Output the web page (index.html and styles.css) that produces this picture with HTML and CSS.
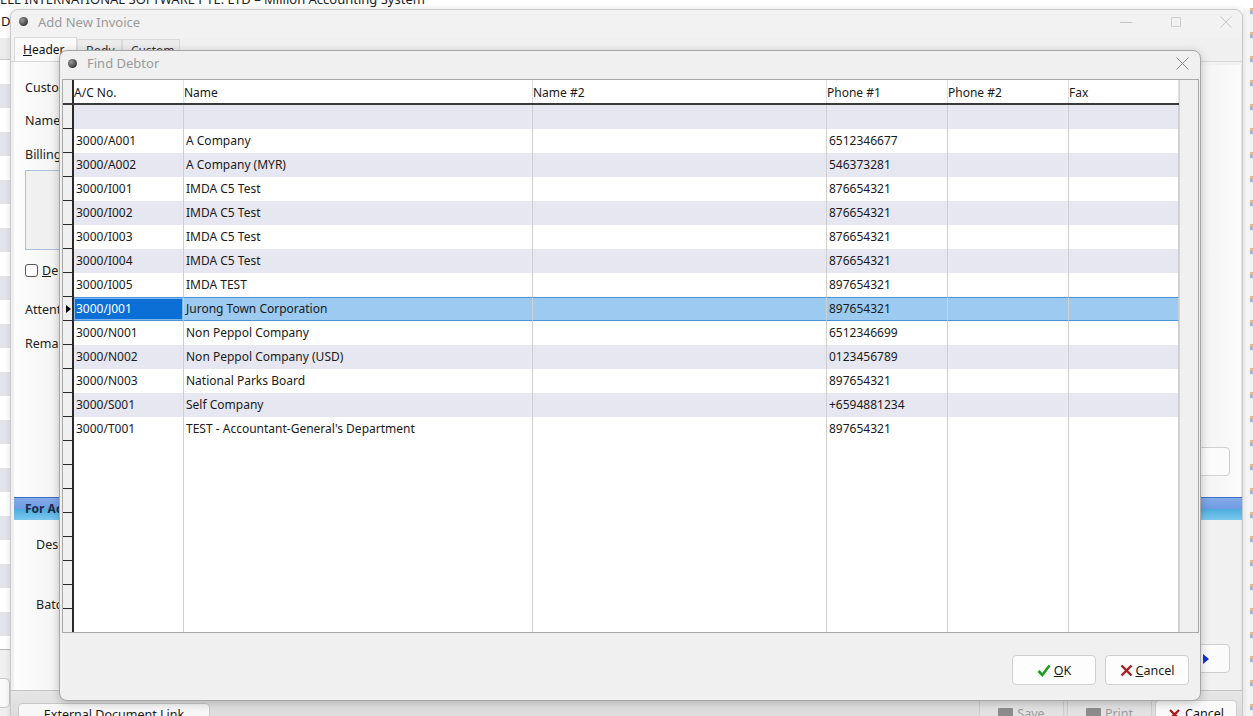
FILE: index.html
```html
<!DOCTYPE html>
<html lang="en">

<head>
  <meta charset="UTF-8" />
  <meta name="viewport" content="width=device-width, initial-scale=1.0" />
  <title>Find Debtor</title>
  <link rel="stylesheet" href="styles.css">
</head>

<body>
  <div class="desk">
    <!-- main application behind the windows -->
    <div class="app">
      <div class="app-title"><span>ELL INTERNATIONAL SOFTWARE PTE. LTD – Million Accounting System</span></div>
      <div class="app-body">
        <div class="app-left">
          <div class="app-menu">D</div>
          <div class="app-gap"></div>
          <div class="app-rows"></div>
          <div class="app-foot"><div class="app-box"></div></div>
        </div>
        <div class="app-mid"></div>
        <div class="app-right"></div>
      </div>
    </div>

    <!-- Add New Invoice window -->
    <div class="win invoice">
      <div class="win-title">
        <span class="orb"></span>
        <span class="win-caption">Add New Invoice</span>
        <div class="win-ctrls">
          <svg width="12" height="12" viewBox="0 0 12 12"><path d="M0 6.5h12" stroke="#c4c4c4" stroke-width="1" /></svg>
          <svg width="12" height="12" viewBox="0 0 12 12"><rect x="1.5" y="1.5" width="9" height="9" fill="none" stroke="#d0d0d0" stroke-width="1" /></svg>
          <svg width="12" height="12" viewBox="0 0 12 12"><path d="M0.5 0.5l11 11M11.5 0.5l-11 11" stroke="#c8c8c8" stroke-width="1" /></svg>
        </div>
      </div>
      <div class="tabs">
        <div class="tab active"><u>H</u>eader</div>
        <div class="tab">Body</div>
        <div class="tab">Custom</div>
      </div>
      <div class="inv-panel">
        <div class="inv-top">
          <div class="inv-form">
            <div class="lbl">Customer</div>
            <div class="lbl lbl-name">Name</div>
            <div class="lbl lbl-bill">Billing Address</div>
            <div class="addr-box"></div>
            <div class="chk-row"><span class="chk"></span><span><u>D</u>elivery Address</span></div>
            <div class="lbl lbl-attn">Attention</div>
            <div class="lbl lbl-rem">Remarks</div>
          </div>
          <div class="inv-side">
            <div class="side-btn"></div>
          </div>
        </div>
        <div class="sect-bar">For Accounting</div>
        <div class="inv-lower">
          <div class="inv-form2">
            <div class="lbl">Description</div>
            <div class="lbl lbl-batch">Batch</div>
          </div>
          <div class="inv-side side-low">
            <div class="side-btn"><span class="tri"></span></div>
          </div>
        </div>
      </div>
      <div class="inv-foot">
        <div class="foot-tab">External Document Link</div>
        <div class="foot-btns">
          <div class="fbtn"><span class="ficon"></span>Save</div>
          <div class="fbtn"><span class="ficon"></span>Print</div>
          <div class="fbtn fbtn-cancel">
            <svg width="13" height="13" viewBox="0 0 13 13"><path d="M2 2l9 9M11 2l-9 9" stroke="#b01c1c" stroke-width="2.4" /></svg>Cancel
          </div>
        </div>
      </div>
    </div>

    <!-- Find Debtor dialog -->
    <div class="dlg">
      <div class="dlg-title">
        <span class="orb"></span>
        <span class="dlg-caption">Find Debtor</span>
        <svg class="dlg-close" width="13" height="13" viewBox="0 0 13 13"><path d="M0.5 0.5l12 12M12.5 0.5l-12 12" stroke="#8a8a8a" stroke-width="1" /></svg>
      </div>

      <div class="grid-wrap">
        <div class="grid">
          <div class="row head">
            <div class="ind"></div>
            <div>A/C No.</div>
            <div>Name</div>
            <div>Name #2</div>
            <div>Phone #1</div>
            <div>Phone #2</div>
            <div>Fax</div>
          </div>
          <div class="row alt"><div class="ind"></div><div></div><div></div><div></div><div></div><div></div><div></div></div>
          <div class="row"><div class="ind"></div><div>3000/A001</div><div>A Company</div><div></div><div>6512346677</div><div></div><div></div></div>
          <div class="row alt"><div class="ind"></div><div>3000/A002</div><div>A Company (MYR)</div><div></div><div>546373281</div><div></div><div></div></div>
          <div class="row"><div class="ind"></div><div>3000/I001</div><div>IMDA C5 Test</div><div></div><div>876654321</div><div></div><div></div></div>
          <div class="row alt"><div class="ind"></div><div>3000/I002</div><div>IMDA C5 Test</div><div></div><div>876654321</div><div></div><div></div></div>
          <div class="row"><div class="ind"></div><div>3000/I003</div><div>IMDA C5 Test</div><div></div><div>876654321</div><div></div><div></div></div>
          <div class="row alt"><div class="ind"></div><div>3000/I004</div><div>IMDA C5 Test</div><div></div><div>876654321</div><div></div><div></div></div>
          <div class="row"><div class="ind"></div><div>3000/I005</div><div>IMDA TEST</div><div></div><div>897654321</div><div></div><div></div></div>
          <div class="row selected"><div class="ind"><span class="mark"></span></div><div class="cur">3000/J001</div><div>Jurong Town Corporation</div><div></div><div>897654321</div><div></div><div></div></div>
          <div class="row"><div class="ind"></div><div>3000/N001</div><div>Non Peppol Company</div><div></div><div>6512346699</div><div></div><div></div></div>
          <div class="row alt"><div class="ind"></div><div>3000/N002</div><div>Non Peppol Company (USD)</div><div></div><div>0123456789</div><div></div><div></div></div>
          <div class="row"><div class="ind"></div><div>3000/N003</div><div>National Parks Board</div><div></div><div>897654321</div><div></div><div></div></div>
          <div class="row alt"><div class="ind"></div><div>3000/S001</div><div>Self Company</div><div></div><div>+6594881234</div><div></div><div></div></div>
          <div class="row"><div class="ind"></div><div>3000/T001</div><div>TEST - Accountant-General's Department</div><div></div><div>897654321</div><div></div><div></div></div>
          <div class="row"><div class="ind"></div><div></div><div></div><div></div><div></div><div></div><div></div></div>
          <div class="row"><div class="ind"></div><div></div><div></div><div></div><div></div><div></div><div></div></div>
          <div class="row"><div class="ind"></div><div></div><div></div><div></div><div></div><div></div><div></div></div>
          <div class="row"><div class="ind"></div><div></div><div></div><div></div><div></div><div></div><div></div></div>
          <div class="row"><div class="ind"></div><div></div><div></div><div></div><div></div><div></div><div></div></div>
          <div class="row"><div class="ind"></div><div></div><div></div><div></div><div></div><div></div><div></div></div>
          <div class="row"><div class="ind"></div><div></div><div></div><div></div><div></div><div></div><div></div></div>
          <div class="row"><div class="ind"></div><div></div><div></div><div></div><div></div><div></div><div></div></div>
        </div>
        <div class="grid-side"></div>
      </div>

      <div class="dlg-foot">
        <button class="btn">
          <svg width="14" height="13" viewBox="0 0 14 13"><path d="M1.5 7l3.8 4L12.5 1.5" fill="none" stroke="#1f9a22" stroke-width="2.6" /></svg>
          <span><u>O</u>K</span>
        </button>
        <button class="btn">
          <svg width="13" height="13" viewBox="0 0 13 13"><path d="M1.5 1.5l10 10M11.5 1.5l-10 10" stroke="#a81c1c" stroke-width="2.4" /></svg>
          <span><u>C</u>ancel</span>
        </button>
      </div>
    </div>
  </div>
</body>

</html>
```

FILE: styles.css
```css
* {
  box-sizing: border-box;
}

body {
  margin: 0;
  font-family: "Noto Sans", "Open Sans", sans-serif;
  font-size: 12px;
  color: #1a1a1a;
  background: #fff;
}

.desk {
  position: relative;
  width: 1253px;
  height: 716px;
  overflow: hidden;
}

/* ---------- main app behind ---------- */
.app {
  height: 100%;
  display: flex;
  flex-direction: column;
}

.app-title {
  height: 8px;
  flex-shrink: 0;
  overflow: hidden;
  font-size: 13px;
  line-height: 13px;
  color: #222;
}

.app-title span {
  display: block;
  margin-top: -7px;
  white-space: nowrap;
}

.app-body {
  flex: 1;
  display: flex;
}

.app-left {
  width: 10px;
  display: flex;
  flex-direction: column;
  background: #fff;
}

.app-menu {
  height: 30px;
  font-size: 13px;
  line-height: 26px;
  padding-left: 1px;
  overflow: hidden;
}

.app-gap {
  height: 22px;
  background: #ececec;
  border-bottom: 1px solid #c8c8c8;
}

.app-rows {
  flex: 1;
  background: repeating-linear-gradient(to bottom, #fff 0 24px, #e4e4ee 24px 48px);
  border-bottom: 1px solid #b8b8b8;
}

.app-foot {
  height: 66px;
  background: #f0f0f0;
  padding-top: 28px;
}

.app-box {
  height: 30px;
  border: 1px solid #c8c8c8;
  border-left: none;
  border-radius: 0 5px 5px 0;
  background: #fafafa;
}

.app-mid {
  flex: 1;
}

.app-right {
  width: 10px;
  background:
    linear-gradient(to right, #f6f6f6 0 7px, transparent 7px),
    repeating-linear-gradient(to bottom, #e7b98c 0 3px, #9db4e0 3px 6px, #f2f2f2 6px 24px);
}

/* ---------- generic window bits ---------- */
.win {
  position: absolute;
  display: flex;
  flex-direction: column;
  background: #f0f0f0;
  border: 1px solid #c8c8c8;
}

.win > div {
  flex-shrink: 0;
}

.orb {
  width: 9px;
  height: 9px;
  border-radius: 50%;
  background: radial-gradient(circle at 35% 35%, #9a9a9a, #3c3c3c 70%);
  flex-shrink: 0;
}

/* ---------- Add New Invoice ---------- */
.invoice {
  left: 10px;
  top: 9px;
  width: 1233px;
  height: 724px;
  border-radius: 8px 8px 0 0;
  box-shadow: 0 0 6px rgba(0, 0, 0, 0.12);
}

.win-title {
  height: 28px;
  display: flex;
  align-items: center;
  padding: 0 0 5px 8px;
  background: #f2f2f2;
  border-radius: 8px 8px 0 0;
}

.win-caption {
  margin-left: 10px;
  font-size: 13px;
  color: #9a9a9a;
}

.win-ctrls {
  margin-left: auto;
  display: flex;
  gap: 38px;
  padding-right: 10px;
}

.tabs {
  height: 24px;
  display: flex;
  align-items: flex-end;
  padding-left: 3px;
  background: #f0f0f0;
  border-bottom: 1px solid #d8d8d8;
}

.tab {
  height: 22px;
  line-height: 21px;
  padding-left: 8px;
  border: 1px solid #dadada;
  border-bottom: none;
  background: #ececec;
  color: #333;
}

.tab.active {
  width: 63px;
  height: 24px;
  line-height: 23px;
  background: #fafafa;
  color: #111;
}

.tab:nth-child(2) {
  width: 45px;
}

.tab:nth-child(3) {
  width: 58px;
}

.inv-panel {
  height: 628px;
  display: flex;
  flex-direction: column;
  margin-left: 3px;
  background: linear-gradient(to right, #fdfdfd, #f1f1f1 60px);
}

.inv-panel > div {
  flex-shrink: 0;
}

.inv-top {
  height: 435px;
  display: flex;
}

.inv-form {
  flex: 1;
  padding: 14px 0 0 11px;
}

.lbl {
  height: 24px;
  line-height: 24px;
  font-size: 12.5px;
  color: #222;
  white-space: nowrap;
}

.lbl-name {
  margin-top: 9px;
}

.lbl-bill {
  margin-top: 10px;
}

.addr-box {
  width: 320px;
  height: 80px;
  margin-top: 3px;
  border: 1px solid #a9bfdc;
  background: #f0f0f0;
}

.chk-row {
  margin-top: 12px;
  height: 16px;
  display: flex;
  align-items: center;
  gap: 4px;
  font-size: 12.5px;
}

.chk {
  width: 13px;
  height: 13px;
  border: 1px solid #555;
  border-radius: 3px;
  background: #fff;
}

.lbl-attn {
  margin-top: 20px;
}

.lbl-rem {
  margin-top: 10px;
}

.inv-side {
  width: 44px;
  margin-top: 3px;
  display: flex;
  flex-direction: column;
  justify-content: flex-end;
  padding-bottom: 21px;
  background: linear-gradient(to right, #f3f3f3, #fbfbfb);
  border-right: 1px solid #e4e4e4;
}

.side-low {
  margin-top: 0;
  padding-bottom: 17px;
  background: #f1f1f1;
}

.side-btn {
  width: 32px;
  height: 29px;
  display: flex;
  align-items: center;
  padding-left: 4px;
  border: 1px solid #cfcfcf;
  border-radius: 4px;
  background: #fbfbfb;
}

.tri {
  width: 0;
  height: 0;
  border-left: 6px solid #1030e0;
  border-top: 5px solid transparent;
  border-bottom: 5px solid transparent;
}

.sect-bar {
  height: 23px;
  line-height: 22px;
  padding-left: 11px;
  font-weight: bold;
  font-size: 12px;
  color: #1c2a4a;
  border-top: 1px solid #3f6fc4;
  background: linear-gradient(to bottom, #84aae8 0, #6f9ce4 48%, #4eaede 52%, #7cc8ef 100%);
}

.inv-lower {
  height: 170px;
  display: flex;
}

.inv-form2 {
  flex: 1;
  padding: 13px 0 0 22px;
}

.lbl-batch {
  margin-top: 36px;
}

.inv-foot {
  flex: 1;
  display: flex;
  align-items: flex-start;
  padding: 12px 0 0 7px;
  background: linear-gradient(to bottom, #e6e6e6, #d6d6d6);
  border-top: 1px solid #c4c4c4;
}

.foot-tab {
  width: 192px;
  height: 30px;
  text-align: center;
  padding-top: 2px;
  font-size: 12.5px;
  border: 1px solid #c8c8c8;
  border-radius: 4px 4px 0 0;
  background: #f7f7f7;
}

.foot-btns {
  margin-left: auto;
  margin-top: -3px;
  display: flex;
  gap: 3px;
  padding-right: 5px;
}

.fbtn {
  width: 85px;
  height: 30px;
  display: flex;
  justify-content: center;
  gap: 4px;
  padding-top: 4px;
  font-size: 12.5px;
  color: #9a9a9a;
  background: #e2e2e2;
  border: 1px solid #cdcdcd;
}

.ficon {
  width: 15px;
  height: 10px;
  margin-top: 3px;
  background: #8c8c8c;
  border-radius: 1px;
}

.fbtn-cancel {
  width: 82px;
  color: #111;
  background: #fafafa;
  border-radius: 4px;
}

.fbtn-cancel svg {
  margin-top: 3px;
}

/* ---------- Find Debtor dialog ---------- */
.dlg {
  position: absolute;
  left: 59px;
  top: 50px;
  width: 1142px;
  height: 651px;
  display: flex;
  flex-direction: column;
  background: #f0f0f0;
  border: 1px solid #a6a6a6;
  border-radius: 8px;
  box-shadow: 0 2px 10px rgba(0, 0, 0, 0.22);
}

.dlg > div {
  flex-shrink: 0;
}

.dlg-title {
  height: 28px;
  display: flex;
  align-items: center;
  padding: 0 0 4px 8px;
}

.dlg-caption {
  margin-left: 10px;
  font-size: 13px;
  color: #9a9a9a;
}

.dlg-close {
  margin-left: auto;
  margin-right: 11px;
}

.grid-wrap {
  height: 554px;
  margin-left: 2px;
  margin-right: 1px;
  display: flex;
  border: 1px solid #a8a8a8;
  overflow: hidden;
}

.grid {
  width: 1116px;
  background: #fff;
}

.grid-side {
  flex: 1;
  background: #f0f0f0;
  border-left: 1px solid #d4d4d4;
}

.row {
  display: grid;
  grid-template-columns: 11px 110px 349px 294px 121px 121px 110px;
  height: 24px;
  line-height: 24px;
}

.row > div {
  border-right: 1px solid #cfcfcf;
  padding-left: 2px;
  white-space: nowrap;
  overflow: hidden;
}

.row > .ind {
  padding: 0;
  background: #f0f0f0;
  border-right: 2px solid #2a2a2a;
  border-bottom: 1px solid #2a2a2a;
  display: flex;
  align-items: center;
  justify-content: center;
}

.row.head {
  height: 25px;
  line-height: 25px;
  border-bottom: 2px solid #3a3a3a;
}

.row.head > div {
  padding-left: 0;
  border-right-color: #e0e0e0;
}

.row.head > .ind {
  border-right-color: #2a2a2a;
  border-bottom: none;
}

.row.alt > div:not(.ind) {
  background: #e7e7f2;
}

.row.selected > div:not(.ind) {
  background: #9ccaf0;
  border-top: 1px solid #4b93dc;
  border-bottom: 1px solid #4b93dc;
  line-height: 22px;
}

.row.selected > div.cur {
  background: #0c6fd6;
  color: #fff;
  box-shadow: inset 0 0 0 1px #7fb6ee;
}

.mark {
  width: 0;
  height: 0;
  margin-left: 2px;
  border-left: 5px solid #000;
  border-top: 4px solid transparent;
  border-bottom: 4px solid transparent;
}

.dlg-foot {
  flex: 1;
  display: flex;
  justify-content: flex-end;
  align-items: flex-start;
  gap: 9px;
  padding: 22px 11px 0 0;
}

.btn {
  width: 84px;
  height: 30px;
  display: flex;
  align-items: center;
  justify-content: center;
  gap: 3px;
  font-family: inherit;
  font-size: 12.5px;
  color: #1a1a1a;
  background: #fdfdfd;
  border: 1px solid #d0d0d0;
  border-radius: 4px;
}
```
